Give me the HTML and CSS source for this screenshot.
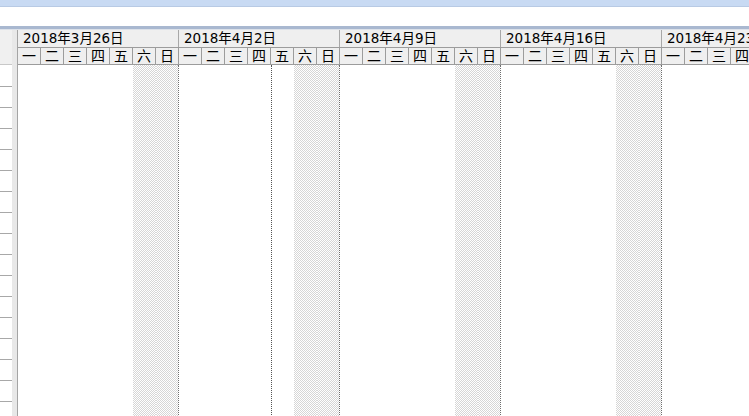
FILE: index.html
```html
<!DOCTYPE html>
<html>
<head>
    <title>Gantt</title>
    <link rel="stylesheet" href="styles.css">
</head>
<body>
    <div class="topbar"></div>
    <div class="toolbar"></div>
    <div class="separator"></div>

    <div class="main">
        <div class="left-pane">
            <div class="left-head"></div>
            <div class="left-rows"></div>
        </div>
        <div class="splitter"></div>

        <div class="chart">
            <div class="week-row">
                <div class="week-cell">2018年3月26日</div>
                <div class="week-cell">2018年4月2日</div>
                <div class="week-cell">2018年4月9日</div>
                <div class="week-cell">2018年4月16日</div>
                <div class="week-cell">2018年4月23日</div>
            </div>
            <div class="day-row">
                <div class="week-days"><span>一</span><span>二</span><span>三</span><span>四</span><span>五</span><span>六</span><span>日</span></div>
                <div class="week-days"><span>一</span><span>二</span><span>三</span><span>四</span><span>五</span><span>六</span><span>日</span></div>
                <div class="week-days"><span>一</span><span>二</span><span>三</span><span>四</span><span>五</span><span>六</span><span>日</span></div>
                <div class="week-days"><span>一</span><span>二</span><span>三</span><span>四</span><span>五</span><span>六</span><span>日</span></div>
                <div class="week-days"><span>一</span><span>二</span><span>三</span><span>四</span><span>五</span><span>六</span><span>日</span></div>
            </div>

            <div class="chart-body">
                <div class="week-col">
                    <div class="day"></div><div class="day"></div><div class="day"></div><div class="day"></div><div class="day"></div>
                    <div class="day weekend"></div><div class="day weekend sun"></div>
                </div>
                <div class="week-col">
                    <div class="day"></div><div class="day"></div><div class="day"></div><div class="day"></div><div class="day today"></div>
                    <div class="day weekend"></div><div class="day weekend sun"></div>
                </div>
                <div class="week-col">
                    <div class="day"></div><div class="day"></div><div class="day"></div><div class="day"></div><div class="day"></div>
                    <div class="day weekend"></div><div class="day weekend sun"></div>
                </div>
                <div class="week-col">
                    <div class="day"></div><div class="day"></div><div class="day"></div><div class="day"></div><div class="day"></div>
                    <div class="day weekend"></div><div class="day weekend sun"></div>
                </div>
                <div class="week-col">
                    <div class="day"></div><div class="day"></div><div class="day"></div><div class="day"></div><div class="day"></div>
                    <div class="day weekend"></div><div class="day weekend sun"></div>
                </div>
            </div>
        </div>
    </div>
</body>
</html>
```

FILE: styles.css
```css
html, body {
    margin: 0;
    height: 100%;
    overflow: hidden;
    background: #fff;
}

body {
    font-family: "DejaVu Sans", "Noto Sans CJK SC", sans-serif;
    font-size: 13px;
    color: #000;
}

/* Top chrome */
.topbar {
    height: 6px;
    background: #c8daf3;
    border-bottom: 1px solid #b8cae4;
}

.toolbar {
    height: 19px;
    background: #fff;
}

.separator {
    height: 3px;
    background: #a9b8d0;
    border-bottom: 1px solid #dce1e9;
}

.main {
    display: flex;
    height: calc(100% - 29px);
}

/* Left grid pane */
.left-pane {
    width: 12px;
    flex: 0 0 12px;
    display: flex;
    flex-direction: column;
}

.left-head {
    height: 35px;
    background: #f0f0f0;
    border-bottom: 1px solid #c8c8c8;
    box-sizing: border-box;
}

.left-rows {
    flex: 1;
    margin-top: 1px;
    background: repeating-linear-gradient(to bottom, #fff 0 20px, #a8a8a8 20px 21px);
}

.splitter {
    width: 5px;
    flex: 0 0 5px;
    background: #e8e8e8;
    border-right: 1px solid #a4a4a4;
}

/* Timescale */
.chart {
    flex: 1;
    overflow: hidden;
    display: flex;
    flex-direction: column;
}

.week-row, .day-row {
    display: flex;
    background: #efefef;
    border-bottom: 1px solid #9c9c9c;
    box-sizing: border-box;
    white-space: nowrap;
}

.week-row {
    height: 18px;
}

.day-row {
    height: 17px;
}

.week-cell {
    flex: 0 0 161px;
    box-sizing: border-box;
    border-right: 1px solid #a8a8a8;
    padding-left: 5px;
    line-height: 17px;
    font-size: 13.5px;
}

.week-days {
    flex: 0 0 161px;
    display: flex;
}

.week-days span {
    width: 23px;
    box-sizing: border-box;
    border-right: 1px solid #9c9c9c;
    text-align: center;
    line-height: 16px;
    font-size: 14px;
}

/* Chart body */
.chart-body {
    flex: 1;
    display: flex;
}

.week-col {
    flex: 0 0 161px;
    display: flex;
}

.day {
    width: 23px;
    box-sizing: border-box;
}

.day.weekend {
    background-image: repeating-conic-gradient(#d6d6d6 0 25%, #fff 0 50%);
    background-size: 2px 2px;
}

.day.sun {
    border-right: 1px dotted #6e6e6e;
}

.day.today {
    border-left: 1px dotted #555;
}
```
